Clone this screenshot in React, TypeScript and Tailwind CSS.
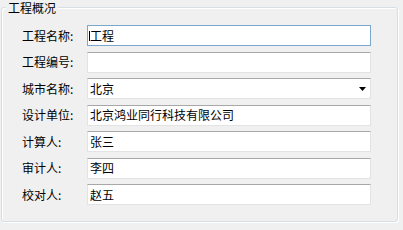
import React from "react";

const font = { fontFamily: '"Noto Sans CJK SC", "Noto Sans", sans-serif' };

type Row = { label: string; value: string; kind?: "focus" | "combo" };

const rows: Row[] = [
  { label: "工程名称:", value: "工程", kind: "focus" },
  { label: "工程编号:", value: "" },
  { label: "城市名称:", value: "北京", kind: "combo" },
  { label: "设计单位:", value: "北京鸿业同行科技有限公司" },
  { label: "计算人:", value: "张三" },
  { label: "审计人:", value: "李四" },
  { label: "校对人:", value: "赵五" },
];

function Field({ row }: { row: Row }) {
  if (row.kind === "focus") {
    return (
      <div className="relative flex h-[21px] w-[284px] items-center border border-[#7aa7cd] bg-white pl-[2px]">
        <span className="absolute left-[1px] top-[5px] h-[10px] w-[1px] bg-black" />
        <span className="text-[12px] leading-[14px] text-black">{row.value}</span>
      </div>
    );
  }
  if (row.kind === "combo") {
    return (
      <div className="flex h-[21px] w-[284px] items-center justify-between border border-[#e3e3e3] border-t-[#a8a8a8] bg-white pl-[2px] pr-[4px]">
        <span className="text-[12px] leading-[14px] text-black">{row.value}</span>
        <svg width="7" height="4" viewBox="0 0 7 4">
          <polygon points="0,0 7,0 3.5,4" fill="#000" />
        </svg>
      </div>
    );
  }
  return (
    <div className="flex h-[21px] w-[284px] items-center border border-[#e3e3e3] border-t-[#a8a8a8] bg-white pl-[2px]">
      <span className="text-[12px] leading-[14px] text-black">{row.value}</span>
    </div>
  );
}

export default function App() {
  return (
    <div className="h-[230px] w-[403px] bg-[#f0f0f0] pl-[1px] pt-[7px]" style={font}>
      <div className="relative h-[215px] w-[397px] rounded-[3px] border border-[#d5dfe5] pl-[20px] pt-[17px] shadow-[inset_1px_1px_0_#ffffff,1px_1px_0_#ffffff]">
        <span className="absolute left-[4px] top-[-7px] bg-[#f0f0f0] px-[2px] text-[12px] leading-[14px] text-black">
          工程概况
        </span>
        <div className="flex flex-col gap-[5.5px]">
          {rows.map((r) => (
            <div key={r.label} className="flex items-center">
              <span className="w-[65px] text-[12px] leading-[14px] text-black">{r.label}</span>
              <Field row={r} />
            </div>
          ))}
        </div>
      </div>
    </div>
  );
}
